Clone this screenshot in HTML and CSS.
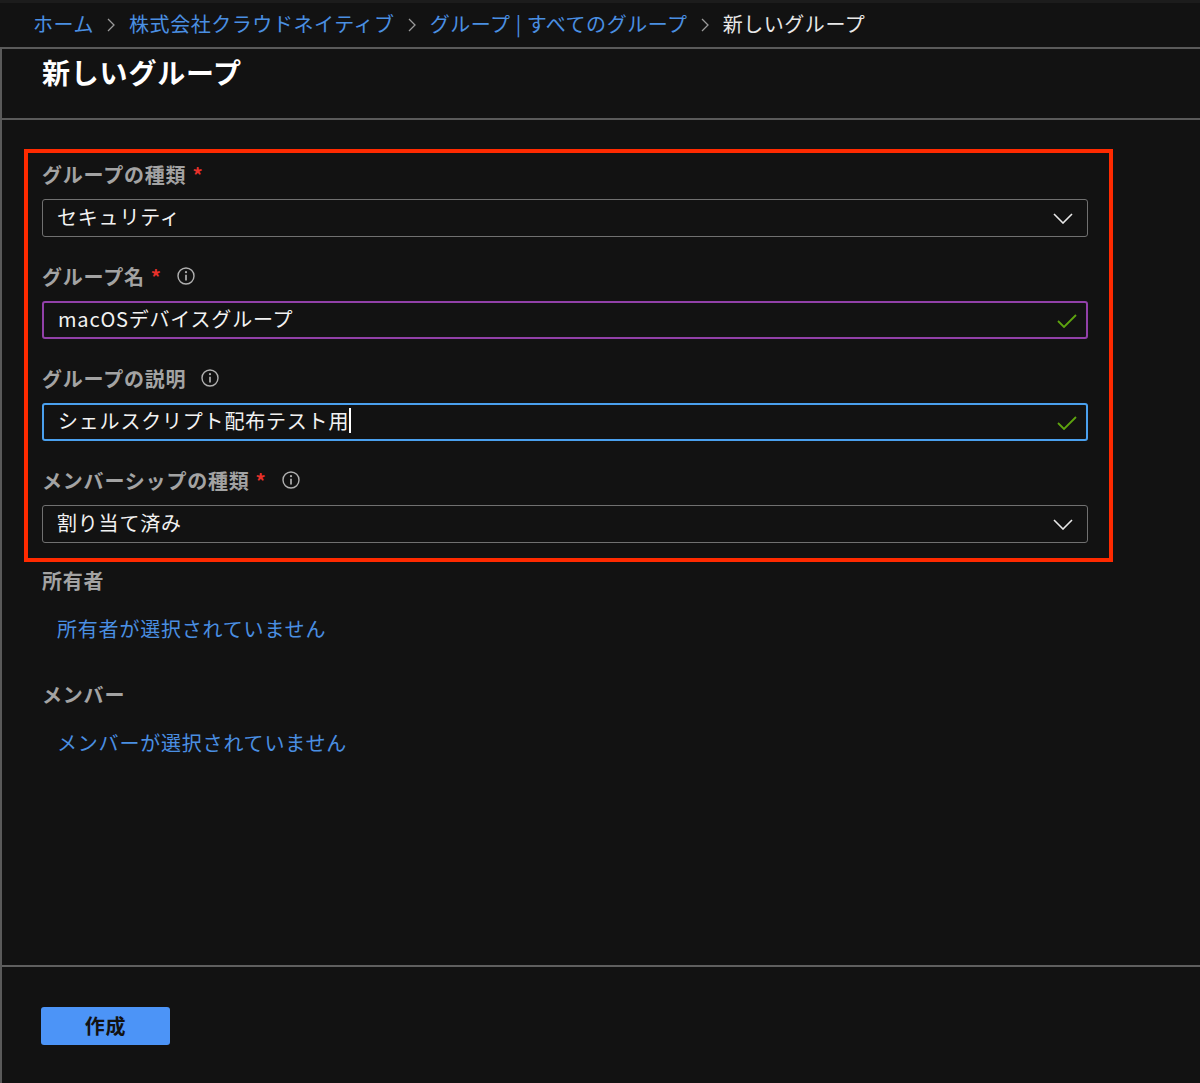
FILE: index.html
```html
<!DOCTYPE html>
<html lang="ja">
<head>
<meta charset="utf-8">
<title>新しいグループ</title>
<link rel="stylesheet" href="styles.css">
</head>
<body>
<div class="topstrip"></div>
<nav class="crumbs">
  <a class="crumb">ホーム</a>
  <svg class="sep" viewBox="0 0 8 14" width="8" height="14"><path d="M1 1 L7 7 L1 13" fill="none" stroke="#9a9a9a" stroke-width="1.3"/></svg>
  <a class="crumb">株式会社クラウドネイティブ</a>
  <svg class="sep" viewBox="0 0 8 14" width="8" height="14"><path d="M1 1 L7 7 L1 13" fill="none" stroke="#9a9a9a" stroke-width="1.3"/></svg>
  <a class="crumb">グループ | すべてのグループ</a>
  <svg class="sep" viewBox="0 0 8 14" width="8" height="14"><path d="M1 1 L7 7 L1 13" fill="none" stroke="#9a9a9a" stroke-width="1.3"/></svg>
  <span class="crumb current">新しいグループ</span>
</nav>
<div class="panel">
  <header class="head"><h1 class="title">新しいグループ</h1></header>
  <main class="content">
    <section class="box">
      <div class="field">
        <div class="label">グループの種類<span class="req">*</span></div>
        <div class="control plain">
          <span class="value">セキュリティ</span>
          <svg class="chev" viewBox="0 0 20 11" width="20" height="11"><path d="M1 1 L10 10 L19 1" fill="none" stroke="#e8e8e8" stroke-width="1.6"/></svg>
        </div>
      </div>
      <div class="field">
        <div class="label">グループ名<span class="req">*</span>
          <svg class="info" viewBox="0 0 18 18" width="18" height="18"><circle cx="9" cy="9" r="8" fill="none" stroke="#b0b0b0" stroke-width="1.4"/><circle cx="9" cy="5.2" r="1.1" fill="#b0b0b0"/><path d="M9 7.8 V13.4" stroke="#b0b0b0" stroke-width="1.7"/></svg>
        </div>
        <div class="control purple">
          <span class="value">macOSデバイスグループ</span>
          <svg class="check" viewBox="0 0 20 14" width="20" height="14"><path d="M1 7 L7 13 L19 1" fill="none" stroke="#5ea40f" stroke-width="1.8"/></svg>
        </div>
      </div>
      <div class="field">
        <div class="label">グループの説明
          <svg class="info" viewBox="0 0 18 18" width="18" height="18"><circle cx="9" cy="9" r="8" fill="none" stroke="#b0b0b0" stroke-width="1.4"/><circle cx="9" cy="5.2" r="1.1" fill="#b0b0b0"/><path d="M9 7.8 V13.4" stroke="#b0b0b0" stroke-width="1.7"/></svg>
        </div>
        <div class="control blue">
          <span class="value">シェルスクリプト配布テスト用<span class="caret"></span></span>
          <svg class="check" viewBox="0 0 20 14" width="20" height="14"><path d="M1 7 L7 13 L19 1" fill="none" stroke="#5ea40f" stroke-width="1.8"/></svg>
        </div>
      </div>
      <div class="field last">
        <div class="label">メンバーシップの種類<span class="req">*</span>
          <svg class="info" viewBox="0 0 18 18" width="18" height="18"><circle cx="9" cy="9" r="8" fill="none" stroke="#b0b0b0" stroke-width="1.4"/><circle cx="9" cy="5.2" r="1.1" fill="#b0b0b0"/><path d="M9 7.8 V13.4" stroke="#b0b0b0" stroke-width="1.7"/></svg>
        </div>
        <div class="control plain">
          <span class="value">割り当て済み</span>
          <svg class="chev" viewBox="0 0 20 11" width="20" height="11"><path d="M1 1 L10 10 L19 1" fill="none" stroke="#e8e8e8" stroke-width="1.6"/></svg>
        </div>
      </div>
    </section>
    <div class="section-label first">所有者</div>
    <a class="link">所有者が選択されていません</a>
    <div class="section-label">メンバー</div>
    <a class="link">メンバーが選択されていません</a>
  </main>
  <footer class="foot">
    <button class="btn">作成</button>
  </footer>
</div>
</body>
</html>
```

FILE: styles.css
```css
* { box-sizing: border-box; }
html, body {
  margin: 0;
  padding: 0;
  background: #121212;
  height: 100%;
}
body {
  font-family: "Noto Sans CJK JP", "Noto Sans", sans-serif;
  color: #e6e6e6;
  overflow: hidden;
  letter-spacing: 0.8px;
}
.topstrip {
  height: 3px;
  background: #1c1c1c;
}
.crumbs {
  height: 44px;
  display: flex;
  align-items: center;
  padding-left: 33px;
  font-size: 20px;
  line-height: 28px;
  letter-spacing: 0.55px;
}
.crumb {
  color: #4a8fe2;
  text-decoration: none;
  padding-bottom: 2px;
}
.crumb.current {
  color: #e8e8e8;
}
.sep {
  margin: 0 14px 0 13px;
  flex: none;
}
.panel {
  height: calc(100vh - 47px);
  border-top: 2px solid #5a5a5a;
  border-left: 2px solid #5a5a5a;
  display: flex;
  flex-direction: column;
}
.head {
  height: 71px;
  border-bottom: 2px solid #5a5a5a;
  padding: 3px 0 0 40px;
}
.title {
  margin: 0;
  font-size: 28px;
  line-height: 40px;
  font-weight: 700;
  color: #ffffff;
  letter-spacing: 0.8px;
}
.content {
  flex: 1;
  padding: 29px 87px 0 22px;
}
.box {
  border: 4px solid #ff2a00;
  padding: 8px 21px 15px 14px;
}
.field {
  margin-bottom: 26px;
}
.field.last {
  margin-bottom: 0;
}
.label {
  display: flex;
  align-items: center;
  height: 28px;
  font-size: 20px;
  font-weight: 700;
  color: #a3a3a3;
  margin-bottom: 10px;
  padding-bottom: 2px;
}
.req {
  color: #e8312a;
  margin-left: 6px;
  font-size: 20px;
}
.info {
  margin-left: 15px;
  flex: none;
}
.control {
  height: 38px;
  border: 1.5px solid #707070;
  border-radius: 3px;
  display: flex;
  align-items: center;
  justify-content: space-between;
  padding: 0 14px 0 14px;
  font-size: 20px;
  color: #f2f2f2;
}
.control.purple {
  border: 2px solid #9140a8;
  padding-right: 9px;
}
.control.blue {
  border: 2px solid #4aa0ee;
  padding-right: 9px;
}
.value {
  display: flex;
  align-items: center;
  padding-bottom: 3px;
}
.caret {
  display: inline-block;
  width: 1.5px;
  height: 25px;
  background: #ffffff;
  margin-left: 0;
}
.check { margin-top: 2px; }
.chev { margin-top: 1px; }
.section-label {
  margin: 38px 0 0 18px;
  font-size: 20px;
  line-height: 28px;
  font-weight: 700;
  color: #a3a3a3;
}
.section-label.first {
  margin-top: 5px;
}
.link {
  display: block;
  margin: 20px 0 0 33px;
  font-size: 20px;
  line-height: 28px;
  color: #4a8fe2;
  text-decoration: none;
}
.foot {
  height: 118px;
  border-top: 2px solid #5f5f5f;
  padding: 40px 0 0 39px;
}
.btn {
  width: 129px;
  height: 38px;
  border: none;
  border-radius: 3px;
  background: #4c94f7;
  color: #121212;
  font-family: "Noto Sans CJK JP", sans-serif;
  font-size: 20px;
  font-weight: 700;
  line-height: 38px;
  padding: 0;
  letter-spacing: 0.8px;
}
```
